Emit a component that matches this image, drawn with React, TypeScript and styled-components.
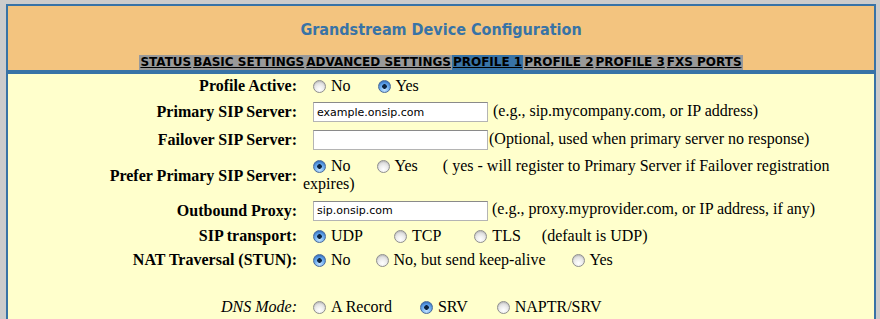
import React from "react"
import styled, { createGlobalStyle } from "styled-components"

const GlobalStyle = createGlobalStyle`
  html, body {
    margin: 0;
    padding: 0;
    background: #cccccc;
  }
  body {
    font-family: "Liberation Serif", "Times New Roman", serif;
    font-size: 16px;
    color: #000;
  }
`

const BLUE = "#3873a6"

const Page = styled.div`
  padding: 4px 0 0 6px;
`

const Frame = styled.div`
  width: 866px;
  border: 2px solid ${BLUE};
  border-bottom: none;
  background: #ffffcc;
`

const Header = styled.div`
  height: 64px;
  background: #f3c47f;
  border-bottom: 4px solid ${BLUE};
  display: flex;
  flex-direction: column;
  align-items: center;
`

const Title = styled.div`
  margin-top: 14px;
  font-family: "DejaVu Sans", Verdana, sans-serif;
  font-stretch: condensed;
  font-weight: bold;
  font-size: 16px;
  line-height: 20px;
  color: ${BLUE};
`

const Tabs = styled.div`
  margin-top: 15px;
  display: flex;
`

const Tab = styled.a<{ $active?: boolean }>`
  display: block;
  padding: 0 1px;
  font-family: "DejaVu Sans", Verdana, sans-serif;
  font-weight: bold;
  font-size: 12px;
  line-height: 15px;
  color: #000;
  text-decoration: underline;
  background: ${(p) => (p.$active ? BLUE : "#999999")};
  cursor: pointer;
`

const Form = styled.div`
  display: flex;
  flex-direction: column;
`

const Row = styled.div<{ $h: number }>`
  display: flex;
  align-items: center;
  min-height: ${(p) => p.$h}px;
`

const Label = styled.div<{ $plain?: boolean }>`
  width: 292px;
  flex: none;
  box-sizing: border-box;
  padding-right: 3px;
  text-align: right;
  font-weight: ${(p) => (p.$plain ? "normal" : "bold")};
  font-style: ${(p) => (p.$plain ? "italic" : "normal")};
`

const Value = styled.div<{ $wrap?: boolean }>`
  flex: 1;
  padding-left: 3px;
  padding-right: 3px;
  text-indent: 10px;
  line-height: 18px;
  ${(p) => (p.$wrap ? "padding-top: 3px; padding-bottom: 4px;" : "")}
`

const Option = styled.label<{ $space?: number }>`
  display: inline-flex;
  align-items: center;
  gap: 5px;
  text-indent: 0;
  vertical-align: top;
  margin-right: ${(p) => p.$space ?? 26}px;
`

const Radio = styled.input.attrs({ type: "radio" })`
  appearance: none;
  -webkit-appearance: none;
  flex: none;
  width: 13px;
  height: 13px;
  margin: 0;
  border-radius: 50%;
  box-sizing: border-box;
  border: 1px solid #8e8e8e;
  background: radial-gradient(circle at 50% 75%, #ffffff 0%, #f0f0f0 35%, #c9c9c9 100%);
  box-shadow: inset 0 1px 1px rgba(0, 0, 0, 0.12);

  &:checked {
    border-color: #4a6a9a;
    background:
      radial-gradient(circle at 50% 50%, #0d2440 0, #0d2440 2px, transparent 2.6px),
      radial-gradient(circle at 50% 80%, #c6e4ff 0%, #6eaef0 45%, #2b6fc9 100%);
  }
`

const Input = styled.input`
  width: 175px;
  height: 20px;
  box-sizing: border-box;
  margin: 0;
  padding: 0 3px;
  text-indent: 0;
  border: 1px solid #b4b4b4;
  border-top-color: #8a8a8a;
  background: #fff;
  font-family: "DejaVu Sans", "Lucida Grande", sans-serif;
  font-size: 11px;
  color: #000;
  vertical-align: middle;
  outline: none;
`

const Remark = styled.span<{ $gap?: number }>`
  margin-left: ${(p) => p.$gap ?? 0}px;
`

const tabs = [
  "STATUS",
  "BASIC SETTINGS",
  "ADVANCED SETTINGS",
  "PROFILE 1",
  "PROFILE 2",
  "PROFILE 3",
  "FXS PORTS",
]

export default function App() {
  return (
    <>
      <GlobalStyle />
      <Page>
        <Frame>
          <Header>
            <Title>Grandstream Device Configuration</Title>
            <Tabs>
              {tabs.map((t) => (
                <Tab key={t} $active={t === "PROFILE 1"}>
                  {t}
                </Tab>
              ))}
            </Tabs>
          </Header>
          <Form>
            <Row $h={24}>
              <Label>Profile Active:</Label>
              <Value>
                <Option $space={27}>
                  <Radio name="active" />
                  No
                </Option>
                <Option>
                  <Radio name="active" defaultChecked />
                  Yes
                </Option>
              </Value>
            </Row>
            <Row $h={28}>
              <Label>Primary SIP Server:</Label>
              <Value>
                <Input defaultValue="example.onsip.com" />
                <Remark $gap={5}>(e.g., sip.mycompany.com, or IP address)</Remark>
              </Value>
            </Row>
            <Row $h={28}>
              <Label>Failover SIP Server:</Label>
              <Value>
                <Input defaultValue="" />
                <Remark $gap={1}>(Optional, used when primary server no response)</Remark>
              </Value>
            </Row>
            <Row $h={43}>
              <Label>Prefer Primary SIP Server:</Label>
              <Value $wrap>
                <Option>
                  <Radio name="prefer" defaultChecked />
                  No
                </Option>
                <Option $space={25}>
                  <Radio name="prefer" />
                  Yes
                </Option>
                <Remark>( yes - will register to Primary Server if Failover registration</Remark>
                <br />
                <Remark>expires)</Remark>
              </Value>
            </Row>
            <Row $h={27}>
              <Label>Outbound Proxy:</Label>
              <Value>
                <Input defaultValue="sip.onsip.com" />
                <Remark $gap={4}>(e.g., proxy.myprovider.com, or IP address, if any)</Remark>
              </Value>
            </Row>
            <Row $h={24}>
              <Label>SIP transport:</Label>
              <Value>
                <Option $space={31}>
                  <Radio name="transport" defaultChecked />
                  UDP
                </Option>
                <Option $space={33}>
                  <Radio name="transport" />
                  TCP
                </Option>
                <Option $space={21}>
                  <Radio name="transport" />
                  TLS
                </Option>
                <Remark>(default is UDP)</Remark>
              </Value>
            </Row>
            <Row $h={24}>
              <Label>NAT Traversal (STUN):</Label>
              <Value>
                <Option $space={25}>
                  <Radio name="nat" defaultChecked />
                  No
                </Option>
                <Option>
                  <Radio name="nat" />
                  No, but send keep-alive
                </Option>
                <Option>
                  <Radio name="nat" />
                  Yes
                </Option>
              </Value>
            </Row>
            <Row $h={23} />
            <Row $h={24}>
              <Label $plain>DNS Mode:</Label>
              <Value>
                <Option $space={28}>
                  <Radio name="dns" />
                  A Record
                </Option>
                <Option $space={29}>
                  <Radio name="dns" defaultChecked />
                  SRV
                </Option>
                <Option>
                  <Radio name="dns" />
                  NAPTR/SRV
                </Option>
              </Value>
            </Row>
          </Form>
        </Frame>
      </Page>
    </>
  )
}
